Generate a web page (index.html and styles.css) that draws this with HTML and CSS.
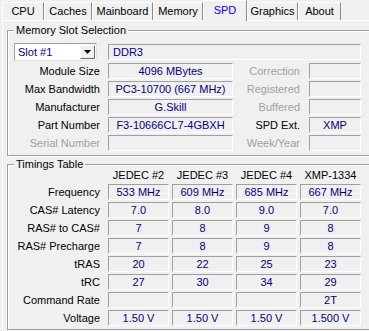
FILE: index.html
```html
<!DOCTYPE html>
<html>
<head>
    <title>CPU-Z</title>
    <meta http-equiv="Content-Type" content="text/html; charset=utf-8">
    <link rel="stylesheet" href="styles.css">
</head>
<body>

<div class="tabs">
    <div class="tab">CPU</div>
    <div class="tab">Caches</div>
    <div class="tab">Mainboard</div>
    <div class="tab">Memory</div>
    <div class="tab active">SPD</div>
    <div class="tab">Graphics</div>
    <div class="tab">About</div>
</div>

<div class="panel">

    <div class="group" id="slot">
        <div class="group-title">Memory Slot Selection</div>

        <div class="slot-row">
            <div class="combo">
                <span class="combo-text">Slot #1</span>
                <span class="combo-btn"><svg width="7" height="4" viewBox="0 0 7 4"><path d="M0 0h7L3.5 4z" fill="#000"/></svg></span>
            </div>
            <div class="box type">DDR3</div>
        </div>

        <div class="info">
            <div class="label">Module Size</div>
            <div class="box">4096 MBytes</div>
            <div class="label off">Correction</div>
            <div class="box"></div>

            <div class="label">Max Bandwidth</div>
            <div class="box">PC3-10700 (667 MHz)</div>
            <div class="label off">Registered</div>
            <div class="box"></div>

            <div class="label">Manufacturer</div>
            <div class="box">G.Skill</div>
            <div class="label off">Buffered</div>
            <div class="box"></div>

            <div class="label">Part Number</div>
            <div class="box">F3-10666CL7-4GBXH</div>
            <div class="label">SPD Ext.</div>
            <div class="box">XMP</div>

            <div class="label off">Serial Number</div>
            <div class="box"></div>
            <div class="label off">Week/Year</div>
            <div class="box"></div>
        </div>
    </div>

    <div class="group" id="timings">
        <div class="group-title">Timings Table</div>

        <div class="timings">
            <div></div>
            <div class="head">JEDEC #2</div>
            <div class="head">JEDEC #3</div>
            <div class="head">JEDEC #4</div>
            <div class="head">XMP-1334</div>

            <div class="label">Frequency</div>
            <div class="box">533 MHz</div>
            <div class="box">609 MHz</div>
            <div class="box">685 MHz</div>
            <div class="box">667 MHz</div>

            <div class="label">CAS# Latency</div>
            <div class="box">7.0</div>
            <div class="box">8.0</div>
            <div class="box">9.0</div>
            <div class="box">7.0</div>

            <div class="label">RAS# to CAS#</div>
            <div class="box">7</div>
            <div class="box">8</div>
            <div class="box">9</div>
            <div class="box">8</div>

            <div class="label">RAS# Precharge</div>
            <div class="box">7</div>
            <div class="box">8</div>
            <div class="box">9</div>
            <div class="box">8</div>

            <div class="label">tRAS</div>
            <div class="box">20</div>
            <div class="box">22</div>
            <div class="box">25</div>
            <div class="box">23</div>

            <div class="label">tRC</div>
            <div class="box">27</div>
            <div class="box">30</div>
            <div class="box">34</div>
            <div class="box">29</div>

            <div class="label">Command Rate</div>
            <div class="box"></div>
            <div class="box"></div>
            <div class="box"></div>
            <div class="box">2T</div>

            <div class="label">Voltage</div>
            <div class="box">1.50 V</div>
            <div class="box">1.50 V</div>
            <div class="box">1.50 V</div>
            <div class="box">1.500 V</div>
        </div>
    </div>

</div>

</body>
</html>
```

FILE: styles.css
```css
body, html {
    margin: 0;
    padding: 0;
    overflow: hidden;
    background-color: #f0f0f0;
    font-family: 'Liberation Sans', Arial, sans-serif;
    font-size: 11px;
    color: #000;
}

/* tab strip */
.tabs {
    display: grid;
    grid-template-columns: 42px 48px 61px 50px 44px 51px 43px;
    align-items: end;
    height: 20px;
    padding-left: 2px;
}

.tab {
    box-sizing: border-box;
    height: 18px;
    line-height: 17px;
    text-align: center;
    border-top: 1px solid #fff;
    border-left: 1px solid #fff;
    border-right: 1px solid #8a8a8a;
}

.tab.active {
    position: relative;
    z-index: 1;
    height: 21px;
    margin-bottom: -1px;
    padding-top: 1px;
    color: #0000ff;
    background-color: #f0f0f0;
}

/* the window is cut off on the right, so panel and groups run to the edge */
.panel {
    width: 362px;
    margin-left: 2px;
    padding-left: 4px;
    border-top: 1px solid #fff;
    border-left: 1px solid #fff;
}

/* group boxes */
.group {
    border: 1px solid #a0a0a0;
    border-right: none;
    box-shadow: inset 1px 1px 0 #fff, 0 1px 0 #fff;
}

#slot {
    margin-top: 9px;
    padding-bottom: 4px;
}

#timings {
    margin-top: 8px;
    padding-bottom: 3px;
}

.group-title {
    width: max-content;
    margin: -7px 0 -3px 6px;
    padding: 0 2px;
    line-height: 13px;
    background-color: #f0f0f0;
}

/* slot selection */
.slot-row {
    display: flex;
    align-items: center;
    height: 18px;
    margin-top: 9px;
}

.combo {
    box-sizing: border-box;
    display: flex;
    width: 83px;
    height: 18px;
    margin-left: 6px;
    border: 1px solid #a0a0a0;
    border-right-color: #e3e3e3;
    border-bottom-color: #e3e3e3;
    background-color: #fff;
}

.combo-text {
    flex: 1;
    padding-left: 3px;
    line-height: 16px;
    color: #000080;
}

.combo-btn {
    box-sizing: border-box;
    display: flex;
    align-items: center;
    justify-content: center;
    width: 15px;
    margin: 1px 1px 1px 0;
    border-top: 1px solid #fff;
    border-left: 1px solid #fff;
    border-right: 1px solid #696969;
    border-bottom: 1px solid #696969;
    background-color: #f0f0f0;
}

.box {
    box-sizing: border-box;
    height: 16px;
    line-height: 14px;
    text-align: center;
    white-space: nowrap;
    overflow: hidden;
    color: #000080;
    border: 1px solid #a0a0a0;
    border-right-color: #fff;
    border-bottom-color: #fff;
}

.box.type {
    width: 253px;
    margin-left: 11px;
    padding-left: 4px;
    text-align: left;
}

.info {
    display: grid;
    grid-template-columns: 100px 125px 76px 52px;
    grid-auto-rows: 16px;
    row-gap: 2px;
    margin-top: 2px;
}

.label {
    line-height: 16px;
    text-align: right;
    padding-right: 8px;
    white-space: nowrap;
}

.info .label:nth-child(4n+3) {
    padding-right: 9px;
}

.label.off {
    color: #a0a0a0;
}

/* timings */
.timings {
    display: grid;
    grid-template-columns: 97px repeat(4, 61px);
    grid-template-rows: 14px;
    grid-auto-rows: 16px;
    column-gap: 3px;
    row-gap: 2px;
}

.timings .label {
    padding-right: 5px;
}

.head {
    line-height: 14px;
    text-align: center;
}
```
